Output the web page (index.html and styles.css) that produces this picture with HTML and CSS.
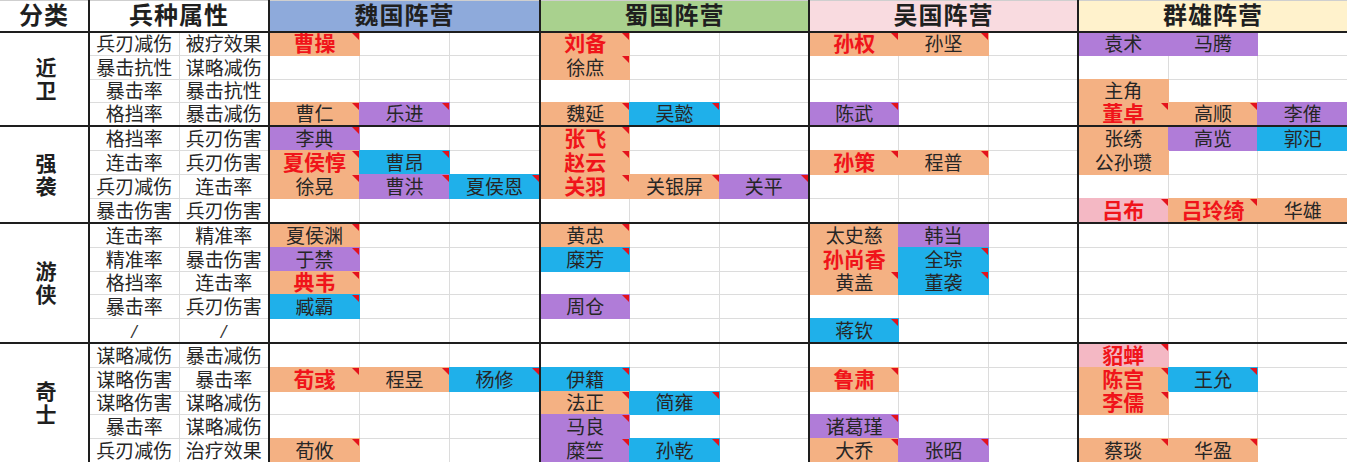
FILE: index.html
```html
<!DOCTYPE html>
<html lang="zh-CN">
<head>
<meta charset="utf-8">
<title>阵营兵种表</title>
<link rel="stylesheet" href="styles.css">
</head>
<body>
<div class="sheet">
  <!-- header -->
  <div class="hd">分类</div>
  <div class="hd">兵种属性</div>
  <div class="hd wei">魏国阵营</div>
  <div class="hd shu">蜀国阵营</div>
  <div class="hd wu">吴国阵营</div>
  <div class="hd qun">群雄阵营</div>

  <!-- 近卫 -->
  <div class="cat"><span class="vt">近卫</span></div>
  <div class="attr r4">
    <div class="a">兵刃减伤</div><div class="a">被疗效果</div>
    <div class="a">暴击抗性</div><div class="a">谋略减伤</div>
    <div class="a">暴击率</div><div class="a">暴击抗性</div>
    <div class="a">格挡率</div><div class="a">暴击减伤</div>
  </div>
  <div class="blk r4">
    <div class="c o r t">曹操</div><div class="c"></div><div class="c"></div>
    <div class="c"></div><div class="c"></div><div class="c"></div>
    <div class="c"></div><div class="c"></div><div class="c"></div>
    <div class="c o t">曹仁</div><div class="c p t">乐进</div><div class="c"></div>
  </div>
  <div class="blk r4">
    <div class="c o r t">刘备</div><div class="c"></div><div class="c"></div>
    <div class="c o t">徐庶</div><div class="c"></div><div class="c"></div>
    <div class="c"></div><div class="c"></div><div class="c"></div>
    <div class="c o t">魏延</div><div class="c b t">吴懿</div><div class="c"></div>
  </div>
  <div class="blk r4">
    <div class="c o r t">孙权</div><div class="c o t">孙坚</div><div class="c"></div>
    <div class="c"></div><div class="c"></div><div class="c"></div>
    <div class="c"></div><div class="c"></div><div class="c"></div>
    <div class="c p t">陈武</div><div class="c"></div><div class="c"></div>
  </div>
  <div class="blk r4">
    <div class="c p">袁术</div><div class="c p">马腾</div><div class="c"></div>
    <div class="c"></div><div class="c"></div><div class="c"></div>
    <div class="c o">主角</div><div class="c"></div><div class="c"></div>
    <div class="c o r t">董卓</div><div class="c o t">高顺</div><div class="c p">李傕</div>
  </div>

  <!-- 强袭 -->
  <div class="cat"><span class="vt">强袭</span></div>
  <div class="attr r4">
    <div class="a">格挡率</div><div class="a">兵刃伤害</div>
    <div class="a">连击率</div><div class="a">兵刃伤害</div>
    <div class="a">兵刃减伤</div><div class="a">连击率</div>
    <div class="a">暴击伤害</div><div class="a">兵刃伤害</div>
  </div>
  <div class="blk r4">
    <div class="c p t">李典</div><div class="c"></div><div class="c"></div>
    <div class="c o r t">夏侯惇</div><div class="c b t">曹昂</div><div class="c"></div>
    <div class="c o t">徐晃</div><div class="c p t">曹洪</div><div class="c b t">夏侯恩</div>
    <div class="c"></div><div class="c"></div><div class="c"></div>
  </div>
  <div class="blk r4">
    <div class="c o r t">张飞</div><div class="c"></div><div class="c"></div>
    <div class="c o r t">赵云</div><div class="c"></div><div class="c"></div>
    <div class="c o r t">关羽</div><div class="c o t">关银屏</div><div class="c p t">关平</div>
    <div class="c"></div><div class="c"></div><div class="c"></div>
  </div>
  <div class="blk r4">
    <div class="c"></div><div class="c"></div><div class="c"></div>
    <div class="c o r t">孙策</div><div class="c o t">程普</div><div class="c"></div>
    <div class="c"></div><div class="c"></div><div class="c"></div>
    <div class="c"></div><div class="c"></div><div class="c"></div>
  </div>
  <div class="blk r4">
    <div class="c o">张绣</div><div class="c p">高览</div><div class="c b">郭汜</div>
    <div class="c o">公孙瓒</div><div class="c"></div><div class="c"></div>
    <div class="c"></div><div class="c"></div><div class="c"></div>
    <div class="c k r t">吕布</div><div class="c o r t">吕玲绮</div><div class="c o">华雄</div>
  </div>

  <!-- 游侠 -->
  <div class="cat"><span class="vt">游侠</span></div>
  <div class="attr r5">
    <div class="a">连击率</div><div class="a">精准率</div>
    <div class="a">精准率</div><div class="a">暴击伤害</div>
    <div class="a">格挡率</div><div class="a">连击率</div>
    <div class="a">暴击率</div><div class="a">兵刃伤害</div>
    <div class="a sl">/</div><div class="a sl">/</div>
  </div>
  <div class="blk r5">
    <div class="c o t">夏侯渊</div><div class="c"></div><div class="c"></div>
    <div class="c p t">于禁</div><div class="c"></div><div class="c"></div>
    <div class="c o r t">典韦</div><div class="c"></div><div class="c"></div>
    <div class="c b t">臧霸</div><div class="c"></div><div class="c"></div>
    <div class="c"></div><div class="c"></div><div class="c"></div>
  </div>
  <div class="blk r5">
    <div class="c o t">黄忠</div><div class="c"></div><div class="c"></div>
    <div class="c b t">糜芳</div><div class="c"></div><div class="c"></div>
    <div class="c"></div><div class="c"></div><div class="c"></div>
    <div class="c p t">周仓</div><div class="c"></div><div class="c"></div>
    <div class="c"></div><div class="c"></div><div class="c"></div>
  </div>
  <div class="blk r5">
    <div class="c o">太史慈</div><div class="c p">韩当</div><div class="c"></div>
    <div class="c o r">孙尚香</div><div class="c b t">全琮</div><div class="c"></div>
    <div class="c o t">黄盖</div><div class="c b t">董袭</div><div class="c"></div>
    <div class="c"></div><div class="c"></div><div class="c"></div>
    <div class="c b t">蒋钦</div><div class="c"></div><div class="c"></div>
  </div>
  <div class="blk r5">
    <div class="c"></div><div class="c"></div><div class="c"></div>
    <div class="c"></div><div class="c"></div><div class="c"></div>
    <div class="c"></div><div class="c"></div><div class="c"></div>
    <div class="c"></div><div class="c"></div><div class="c"></div>
    <div class="c"></div><div class="c"></div><div class="c"></div>
  </div>

  <!-- 奇士 -->
  <div class="cat"><span class="vt">奇士</span></div>
  <div class="attr r5">
    <div class="a">谋略减伤</div><div class="a">暴击减伤</div>
    <div class="a">谋略伤害</div><div class="a">暴击率</div>
    <div class="a">谋略伤害</div><div class="a">谋略减伤</div>
    <div class="a">暴击率</div><div class="a">谋略减伤</div>
    <div class="a">兵刃减伤</div><div class="a">治疗效果</div>
  </div>
  <div class="blk r5">
    <div class="c"></div><div class="c"></div><div class="c"></div>
    <div class="c o r t">荀彧</div><div class="c o t">程昱</div><div class="c b t">杨修</div>
    <div class="c"></div><div class="c"></div><div class="c"></div>
    <div class="c"></div><div class="c"></div><div class="c"></div>
    <div class="c o t">荀攸</div><div class="c"></div><div class="c"></div>
  </div>
  <div class="blk r5">
    <div class="c"></div><div class="c"></div><div class="c"></div>
    <div class="c b t">伊籍</div><div class="c"></div><div class="c"></div>
    <div class="c o t">法正</div><div class="c b t">简雍</div><div class="c"></div>
    <div class="c p t">马良</div><div class="c"></div><div class="c"></div>
    <div class="c p t">糜竺</div><div class="c b t">孙乾</div><div class="c"></div>
  </div>
  <div class="blk r5">
    <div class="c"></div><div class="c"></div><div class="c"></div>
    <div class="c o r t">鲁肃</div><div class="c"></div><div class="c"></div>
    <div class="c"></div><div class="c"></div><div class="c"></div>
    <div class="c p t">诸葛瑾</div><div class="c"></div><div class="c"></div>
    <div class="c o t">大乔</div><div class="c p t">张昭</div><div class="c"></div>
  </div>
  <div class="blk r5">
    <div class="c k r t">貂蝉</div><div class="c"></div><div class="c"></div>
    <div class="c o r t">陈宫</div><div class="c b t">王允</div><div class="c"></div>
    <div class="c o r t">李儒</div><div class="c"></div><div class="c"></div>
    <div class="c"></div><div class="c"></div><div class="c"></div>
    <div class="c o t">蔡琰</div><div class="c o t">华盈</div><div class="c"></div>
  </div>
</div>
</body>
</html>
```

FILE: styles.css
```css
* { box-sizing: border-box; }
html, body {
  margin: 0;
  padding: 0;
  background: #ffffff;
  overflow: hidden;
}
body {
  font-family: "Liberation Sans", "Noto Sans CJK SC", sans-serif;
  color: #262626;
}
.sheet {
  display: grid;
  grid-template-columns: 88px 178px 269px 267px 267px 268px;
  grid-template-rows: 31px 92px 95px 118px 118px;
  gap: 2px;
  background: #1e1e1e;
  width: 1347px;
  height: 462px;
}
.hd {
  display: flex;
  align-items: center;
  justify-content: center;
  background: #ffffff;
  font-size: 24px;
  font-weight: 700;
  line-height: 28px;
  color: #1f1f1f;
  letter-spacing: 1px;
  border-top: 1px solid #cfcfcf;
}
.wei { background: #8eaadb; }
.shu { background: #a9d18e; }
.wu  { background: #f9dbe0; }
.qun { background: #fff2cc; }

.cat {
  background: #ffffff;
  display: flex;
  align-items: center;
  justify-content: center;
  color: #1f1f1f;
}
.vt {
  writing-mode: vertical-rl;
  font-size: 21px;
  font-weight: 700;
  letter-spacing: 2px;
  line-height: 24px;
  margin-top: 2px;
}

.attr, .blk {
  display: grid;
  gap: 1px;
  background: #dcdcdc;
  overflow: hidden;
}
.attr { grid-template-columns: 1fr 1fr; }
.blk { grid-template-columns: 1fr 1fr 1fr; }
.r4 { grid-template-rows: repeat(4, 1fr); }
.r5 { grid-template-rows: repeat(5, 1fr); }

.a, .c {
  background: #ffffff;
  display: flex;
  align-items: flex-end;
  justify-content: center;
  font-size: 19px;
  line-height: 21px;
  white-space: nowrap;
  color: #262626;
  position: relative;
}
.sl {
  font-family: "DejaVu Sans", sans-serif;
  font-size: 16px;
  font-style: italic;
  color: #333333;
}

.o { background: #f4b183; box-shadow: 0 0 0 1px #f4b183; }
.p { background: #b07cd8; box-shadow: 0 0 0 1px #b07cd8; }
.b { background: #1fb0ea; box-shadow: 0 0 0 1px #1fb0ea; }
.k { background: #f4b8c4; box-shadow: 0 0 0 1px #f4b8c4; }

.r {
  color: #f0141a;
  font-weight: 700;
  font-size: 21px;
  line-height: 22px;
}
.t::after {
  content: "";
  position: absolute;
  top: 0;
  right: 0;
  width: 0;
  height: 0;
  border-top: 7px solid #e4121c;
  border-left: 7px solid transparent;
}
```
